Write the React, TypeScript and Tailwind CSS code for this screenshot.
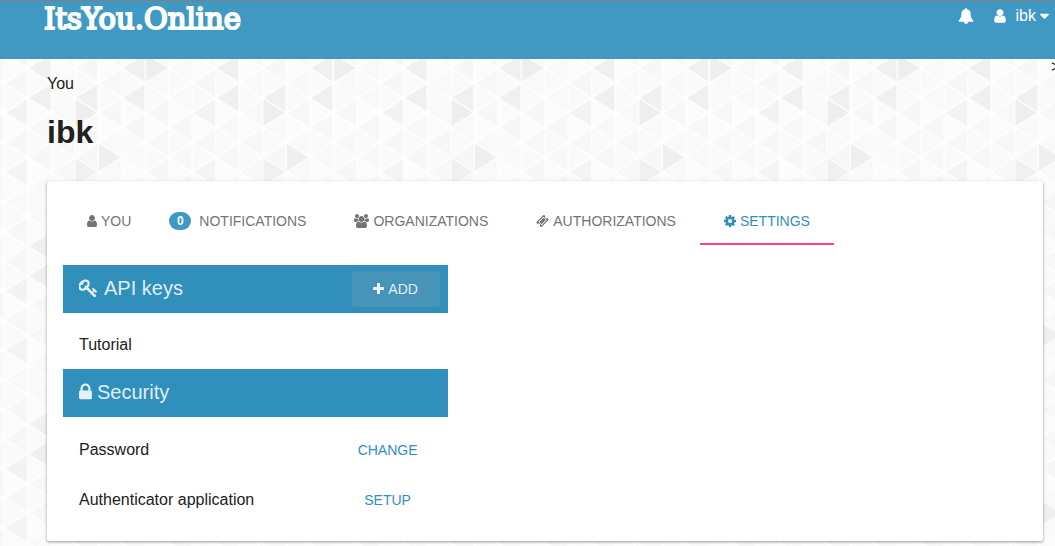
import React from "react";

const icons = {
  user: {
    box: "256 0 1280 1792",
    d: "M1536 1399q0 109-62.5 187t-150.5 78h-854q-88 0-150.5-78t-62.5-187q0-85 8.5-160.5t31.5-152 58.5-131 94-89 134.5-34.5q131 128 313 128t313-128q76 0 134.5 34.5t94 89 58.5 131 31.5 152 8.5 160.5zm-256-887q0 159-112.5 271.5t-271.5 112.5-271.5-112.5-112.5-271.5 112.5-271.5 271.5-112.5 271.5 112.5 112.5 271.5z",
  },
  bell: {
    box: "0 0 1792 1792",
    d: "M912 1696q0-16-16-16-59 0-101.5-42.5t-42.5-101.5q0-16-16-16t-16 16q0 73 51.5 124.5t124.5 51.5q16 0 16-16zm816-288q0 52-38 90t-90 38h-448q0 106-75 181t-181 75-181-75-75-181h-448q-52 0-90-38t-38-90q50-42 91-88t85-119.5 74.5-158.5 50-206 19.5-260q0-152 117-282.5t307-158.5q-8-19-8-39 0-40 28-68t68-28 68 28 28 68q0 20-8 39 190 28 307 158.5t117 282.5q0 139 19.5 260t50 206 74.5 158.5 85 119.5 91 88z",
  },
  caret: {
    box: "384 0 1024 1792",
    d: "M1408 704q0 26-19 45l-448 448q-19 19-45 19t-45-19l-448-448q-19-19-19-45t19-45 45-19h896q26 0 45 19t19 45z",
  },
  lock: {
    box: "320 0 1152 1792",
    d: "M640 768h512v-192q0-106-75-181t-181-75-181 75-75 181v192zm832 96v576q0 40-28 68t-68 28h-960q-40 0-68-28t-28-68v-576q0-40 28-68t68-28h32v-192q0-184 132-316t316-132 316 132 132 316v192h32q40 0 68 28t28 68z",
  },
  plus: {
    box: "192 0 1408 1792",
    d: "M1600 736v192q0 40-28 68t-68 28h-416v416q0 40-28 68t-68 28h-192q-40 0-68-28t-28-68v-416h-416q-40 0-68-28t-28-68v-192q0-40 28-68t68-28h416v-416q0-40 28-68t68-28h192q40 0 68 28t28 68v416h416q40 0 68 28t28 68z",
  },
  cog: {
    box: "128 0 1536 1792",
    d: "M1152 896q0-106-75-181t-181-75-181 75-75 181 75 181 181 75 181-75 75-181zm512-109v222q0 12-8 23t-20 13l-185 28q-19 54-39 91 35 50 107 138 10 12 10 25t-9 23q-27 37-99 108t-94 71q-12 0-26-9l-138-108q-44 23-91 38-16 136-29 186-7 28-36 28h-222q-14 0-24.5-8.5t-11.5-21.5l-28-184q-49-16-90-37l-141 107q-10 9-25 9-14 0-25-11-126-114-165-168-7-10-7-23 0-12 8-23 15-21 51-66.5t54-70.5q-27-50-41-99l-183-27q-13-2-21-12.5t-8-23.5v-222q0-12 8-23t19-13l186-28q14-46 39-92-40-57-107-138-10-12-10-24 0-10 9-23 26-36 98.5-107.5t94.5-71.5q13 0 26 10l138 107q44-23 91-38 16-136 29-186 7-28 36-28h222q14 0 24.5 8.5t11.5 21.5l28 184q49 16 90 37l142-107q9-9 24-9 13 0 25 10 129 119 165 170 7 8 7 22 0 12-8 23-15 21-51 66.5t-54 70.5q26 50 41 98l183 28q13 2 21 12.5t8 23.5z",
  },
  users: {
    box: "-64 0 1920 1792",
    d: "M529 896q-162 5-265 128h-134q-82 0-138-40.5t-56-118.5q0-353 124-353 6 0 43.5 21t97.5 42.5 119 21.5q67 0 133-23-5 37-5 66 0 139 81 256zm1071 637q0 120-73 189.5t-194 69.5h-874q-121 0-194-69.5t-73-189.5q0-53 3.5-103.5t14-109 26.5-108.5 43-97.5 62-81 85.5-53.5 111.5-20q10 0 43 21.5t73 48 107 48 135 21.5 135-21.5 107-48 73-48 43-21.5q61 0 111.5 20t85.5 53.5 62 81 43 97.5 26.5 108.5 14 109 3.5 103.5zm-1024-1277q0 106-75 181t-181 75-181-75-75-181 75-181 181-75 181 75 75 181zm704 384q0 159-112.5 271.5t-271.5 112.5-271.5-112.5-112.5-271.5 112.5-271.5 271.5-112.5 271.5 112.5 112.5 271.5zm576 225q0 78-56 118.5t-138 40.5h-134q-103-123-265-128 81-117 81-256 0-29-5-66 66 23 133 23 59 0 119-21.5t97.5-42.5 43.5-21q124 0 124 353zm-128-609q0 106-75 181t-181 75-181-75-75-181 75-181 181-75 181 75 75 181z",
  },
  ticket: {
    box: "0 0 1792 1792",
    d: "M1024 452l316 316-572 572-316-316zm-211 979l618-618q19-19 19-45t-19-45l-362-362q-18-18-45-18t-45 18l-618 618q-19 19-19 45t19 45l362 362q18 18 45 18t45-18zm889-637l-907 908q-37 37-90.5 37t-90.5-37l-126-125q56-56 56-136t-56-136-136-56-136 56l-125-126q-37-37-37-90.5t37-90.5l907-906q37-37 90.5-37t90.5 37l125 125q-56 56-56 136t56 136 136 56 136-56l126 125q37 37 37 90.5t-37 90.5z",
  },
  key: {
    box: "64 0 1792 1792",
    d: "M832 512q0-80-56-136t-136-56-136 56-56 136q0 42 19 83-41-19-83-19-80 0-136 56t-56 136 56 136 136 56 136-56 56-136q0-42-19-83 41 19 83 19 80 0 136-56t56-136zm851 704q0 17-49 66t-66 49q-9 0-28.5-16t-36.5-33-38.5-40-24.5-26l-96 96 220 220q28 28 28 68 0 42-39 81t-81 39q-40 0-68-28l-671-671q-176 131-365 131-163 0-265.5-102.5t-102.5-265.5q0-160 95-313t248-248 313-95q163 0 265.5 102.5t102.5 265.5q0 189-131 365l355 355 96-96q-3-3-26-24.5t-40-38.5-33-36.5-16-28.5q0-17 49-66t66-49q13 0 23 10 6 6 46 44.5t82 79.5 86.5 86 73 78 28.5 41z",
  },
};

function Icon({ name, className }: { name: keyof typeof icons; className: string }) {
  return (
    <svg viewBox={icons[name].box} className={`shrink-0 ${className}`} fill="currentColor" aria-hidden="true">
      <path d={icons[name].d} />
    </svg>
  );
}

/* Repeating triangle wallpaper: 8 columns by 6 rows per tile. */
const COL = 23.5;
const ROW = 29.667;
const accents: Record<string, string> = {
  "0L1": "#f3f3f3",
  "0L3": "#f4f4f4",
  "1L0": "#f0f0f0",
  "1L1": "#f0f0f0",
  "3L1": "#f0f0f0",
  "3R1": "#eeeeee",
  "3R3": "#f0f0f0",
  "4R3": "#efefef",
  "5L0": "#f0f0f0",
  "5L1": "#f0f0f0",
  "6R0": "#eeeeee",
};
const shades = ["#f7f7f7", "#f9f9f9", "#f8f8f8", "#f9f9f9", "#f7f7f7"];
const lightShades = ["#fbfbfb", "#fafafa", "#fcfcfc", "#fafafa"];

function Wallpaper() {
  const triangles: React.ReactNode[] = [];
  for (let k = 0; k < 8; k++) {
    const x = k * COL;
    for (let r = -1; r < 7; r++) {
      const row = (r + 6) % 6;
      const leftY = (k % 2 ? 0 : ROW / 2) + r * ROW;
      const rightY = (k % 2 ? ROW / 2 : 0) + r * ROW;
      const leftFill = accents[`${k}L${row}`] ?? shades[(k * 3 + row * 2) % 5];
      const rightFill = accents[`${k}R${row}`] ?? lightShades[(k + row * 3) % 4];
      triangles.push(
        <path key={`${k}l${r}`} fill={leftFill} d={`M${x} ${leftY}l${COL} ${-ROW / 2}v${ROW}z`} />,
        <path key={`${k}r${r}`} fill={rightFill} d={`M${x + COL} ${rightY}l${-COL} ${-ROW / 2}v${ROW}z`} />,
      );
    }
  }
  return (
    <svg className="absolute inset-0 -z-10 h-full w-full" aria-hidden="true">
      <defs>
        <pattern id="triangles" x="4.3" y="68.3" width="188" height="178" patternUnits="userSpaceOnUse">
          <g stroke="#ffffff" strokeWidth="1.2" strokeLinejoin="round">
            {triangles}
          </g>
        </pattern>
      </defs>
      <rect width="100%" height="100%" fill="url(#triangles)" />
    </svg>
  );
}

function SectionHeader({ icon, iconClass, title, children }: {
  icon: keyof typeof icons;
  iconClass: string;
  title: string;
  children?: React.ReactNode;
}) {
  return (
    <div className="flex h-12 items-center justify-between bg-[#3090bb] pr-2 pl-4">
      <h2 className="flex items-center gap-[5px] pb-0.5 text-xl text-white/87">
        <Icon name={icon} className={iconClass} />
        {title}
      </h2>
      {children}
    </div>
  );
}

function SettingRow({ label, action }: { label: string; action: string }) {
  return (
    <li className="flex h-[50px] items-center justify-between px-4">
      <span>{label}</span>
      <button type="button" className="h-9 w-[88px] text-sm text-[#3090bb] uppercase">
        {action}
      </button>
    </li>
  );
}

const tab = "flex h-12 items-center gap-1 border-b-2 border-transparent px-6 pt-0.5 text-sm uppercase";

export default function App() {
  return (
    <div className="relative isolate min-h-screen overflow-hidden font-['Liberation_Sans',Arial,sans-serif] text-base text-[#212121]">
      <Wallpaper />
      <header className="flex h-[59px] items-start justify-between border-t border-[#808080] bg-[#3f99c2] pr-1.5 pl-11 text-white">
        <a
          href="#home"
          className="font-['DejaVu_Serif',serif] text-[29px] leading-9 [-webkit-text-stroke:2px_white]"
        >
          ItsYou.Online
        </a>
        <nav className="flex h-[30px] items-center gap-5">
          <button type="button" aria-label="Notifications">
            <Icon name="bell" className="h-4 w-4" />
          </button>
          <button type="button" className="flex items-center">
            <Icon name="user" className="mr-2.5 h-4 w-3" />
            ibk
            <Icon name="caret" className="ml-1 h-4 w-[9px]" />
          </button>
        </nav>
      </header>

      <main className="pr-3 pb-1 pl-[47px]">
        <div className="flex h-9 items-start justify-between">
          <span className="pt-[13px] leading-6">You</span>
          <span className="-mr-3 w-1 leading-4">&gt;</span>
        </div>
        <h1 className="mt-[17px] text-[32px] leading-10 font-bold">ibk</h1>

        <div className="mt-[29px] rounded-xs bg-white p-4 shadow-[0_1px_3px_rgba(0,0,0,0.4)]">
          <nav className="flex text-[#757575]" role="tablist">
            <button type="button" role="tab" className={tab}>
              <Icon name="user" className="h-3.5 w-2.5" />
              You
            </button>
            <button type="button" role="tab" className="flex h-12 items-center gap-2 border-b-2 border-transparent pt-0.5 pr-6 pl-3.5 text-sm uppercase">
              <span className="h-[18px] w-[22px] rounded-full bg-[#3f99c2] text-center text-xs leading-[18px] font-bold text-white">
                0
              </span>
              Notifications
            </button>
            <button type="button" role="tab" className={tab}>
              <Icon name="users" className="h-3.5 w-[15px]" />
              Organizations
            </button>
            <button type="button" role="tab" className={tab}>
              <Icon name="ticket" className="h-3.5 w-[13px]" />
              Authorizations
            </button>
            <button
              type="button"
              role="tab"
              aria-selected="true"
              className="flex h-12 items-center gap-1 border-b-2 border-[#ff4081] px-6 pt-0.5 text-sm text-[#3090bb] uppercase"
            >
              <Icon name="cog" className="h-3.5 w-3" />
              Settings
            </button>
          </nav>

          <div className="w-2/5 pt-5 pr-px">
            <section>
              <SectionHeader icon="key" iconClass="h-5 w-5" title="API keys">
                <button
                  type="button"
                  className="flex h-9 w-[88px] items-center justify-center gap-1 rounded-xs bg-[#4794b8] text-sm text-white/87"
                >
                  <Icon name="plus" className="h-3.5 w-[11px]" />
                  ADD
                </button>
              </SectionHeader>
              <ul>
                <li className="px-4 pt-5 pb-3 leading-6">Tutorial</li>
              </ul>
            </section>
            <section>
              <SectionHeader icon="lock" iconClass="h-5 w-[13px]" title="Security" />
              <ul className="pt-2">
                <SettingRow label="Password" action="Change" />
                <SettingRow label="Authenticator application" action="Setup" />
              </ul>
            </section>
          </div>
        </div>
      </main>
    </div>
  );
}
